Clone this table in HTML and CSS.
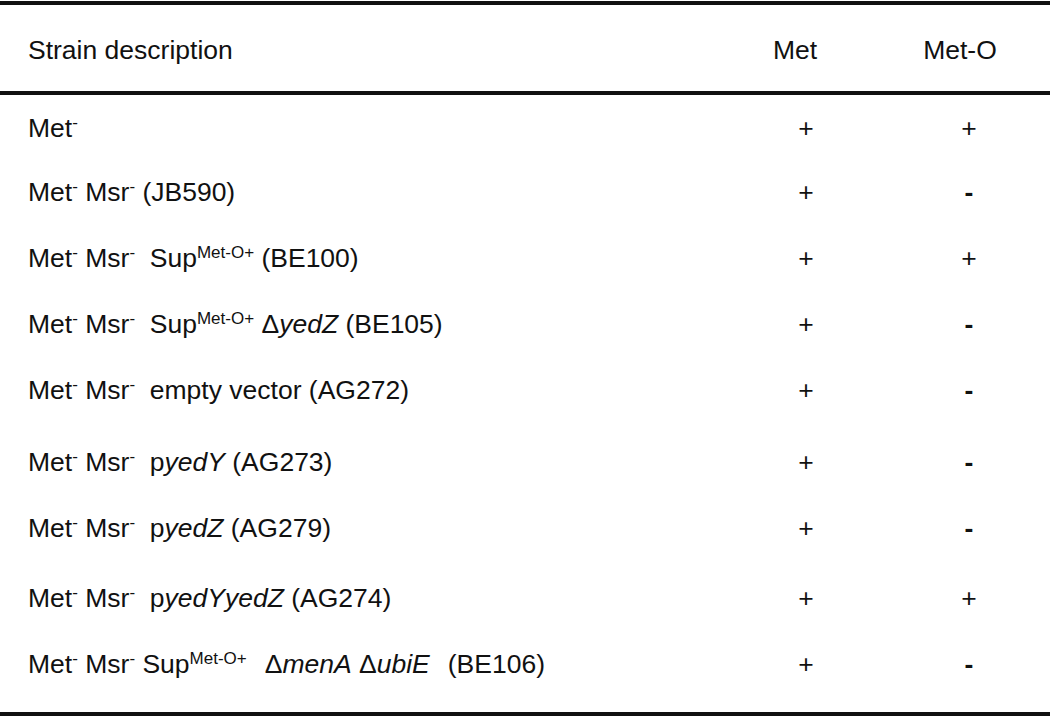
FILE: index.html
```html
<!DOCTYPE html>
<html>
<head>
<meta charset="utf-8">
<link rel="stylesheet" href="styles.css">
</head>
<body>
<div class="table">
  <div class="row head">
    <div class="desc">Strain description</div>
    <div class="col met">Met</div>
    <div class="col meto">Met-O</div>
  </div>
  <div class="body">
    <div class="row">
      <div class="desc">Met<sup class="neg">-</sup></div>
      <div class="col met">+</div>
      <div class="col meto">+</div>
    </div>
    <div class="row">
      <div class="desc">Met<sup class="neg">-</sup> Msr<sup class="neg">-</sup> (JB590)</div>
      <div class="col met">+</div>
      <div class="col meto"><span class="minus">-</span></div>
    </div>
    <div class="row">
      <div class="desc">Met<sup class="neg">-</sup> Msr<sup class="neg">-</sup>&nbsp; Sup<sup class="sup">Met-O+</sup> (BE100)</div>
      <div class="col met">+</div>
      <div class="col meto">+</div>
    </div>
    <div class="row">
      <div class="desc">Met<sup class="neg">-</sup> Msr<sup class="neg">-</sup>&nbsp; Sup<sup class="sup">Met-O+</sup> Δ<i>yedZ</i> (BE105)</div>
      <div class="col met">+</div>
      <div class="col meto"><span class="minus">-</span></div>
    </div>
    <div class="row">
      <div class="desc">Met<sup class="neg">-</sup> Msr<sup class="neg">-</sup>&nbsp; empty vector (AG272)</div>
      <div class="col met">+</div>
      <div class="col meto"><span class="minus">-</span></div>
    </div>
    <div class="row gap">
      <div class="desc">Met<sup class="neg">-</sup> Msr<sup class="neg">-</sup>&nbsp; p<i>yedY</i> (AG273)</div>
      <div class="col met">+</div>
      <div class="col meto"><span class="minus">-</span></div>
    </div>
    <div class="row">
      <div class="desc">Met<sup class="neg">-</sup> Msr<sup class="neg">-</sup>&nbsp; p<i>yedZ</i> (AG279)</div>
      <div class="col met">+</div>
      <div class="col meto"><span class="minus">-</span></div>
    </div>
    <div class="row tall">
      <div class="desc">Met<sup class="neg">-</sup> Msr<sup class="neg">-</sup>&nbsp; p<i>yedYyedZ</i> (AG274)</div>
      <div class="col met">+</div>
      <div class="col meto">+</div>
    </div>
    <div class="row">
      <div class="desc">Met<sup class="neg">-</sup> Msr<sup class="neg">-</sup> Sup<sup class="sup">Met-O+</sup><span class="wide"></span>Δ<i>menA</i> Δ<i>ubiE</i><span class="wide"></span>(BE106)</div>
      <div class="col met">+</div>
      <div class="col meto"><span class="minus">-</span></div>
    </div>
  </div>
</div>
</body>
</html>
```

FILE: styles.css
```css
html, body {
  margin: 0;
  padding: 0;
  background: #ffffff;
}

body {
  padding-top: 1px;
  font-family: "Liberation Sans", Arial, Helvetica, sans-serif;
  font-size: 26.5px;
  color: #111111;
}

.table {
  border-top: 4px solid #111111;
  border-bottom: 4px solid #111111;
}

.row {
  display: grid;
  grid-template-columns: 720px 160px 170px;
  align-items: center;
  height: 66px;
}

.row.head {
  height: 82px;
  padding-top: 4px;
  border-bottom: 4px solid #111111;
}

.body {
  padding-top: 0;
  padding-bottom: 15px;
}

.body .row:first-child {
  height: 64px;
  padding-top: 2px;
  box-sizing: border-box;
}

.row.gap {
  margin-top: 6px;
}

.row.tall {
  height: 70px;
  padding-top: 4px;
  box-sizing: border-box;
}

.desc {
  padding-left: 28px;
  white-space: nowrap;
}

.col {
  text-align: center;
}

.head .met,
.head .meto {
  padding-right: 10px;
}

.body .met {
  padding-left: 12px;
}

.body .meto {
  padding-left: 8px;
}

.minus {
  font-weight: bold;
}

sup {
  line-height: 0;
}

sup.neg {
  font-size: 17px;
  vertical-align: 9px;
}

sup.sup {
  font-size: 17px;
  vertical-align: 9px;
}

.wide {
  display: inline-block;
  width: 18px;
}

i {
  font-style: italic;
}
```
